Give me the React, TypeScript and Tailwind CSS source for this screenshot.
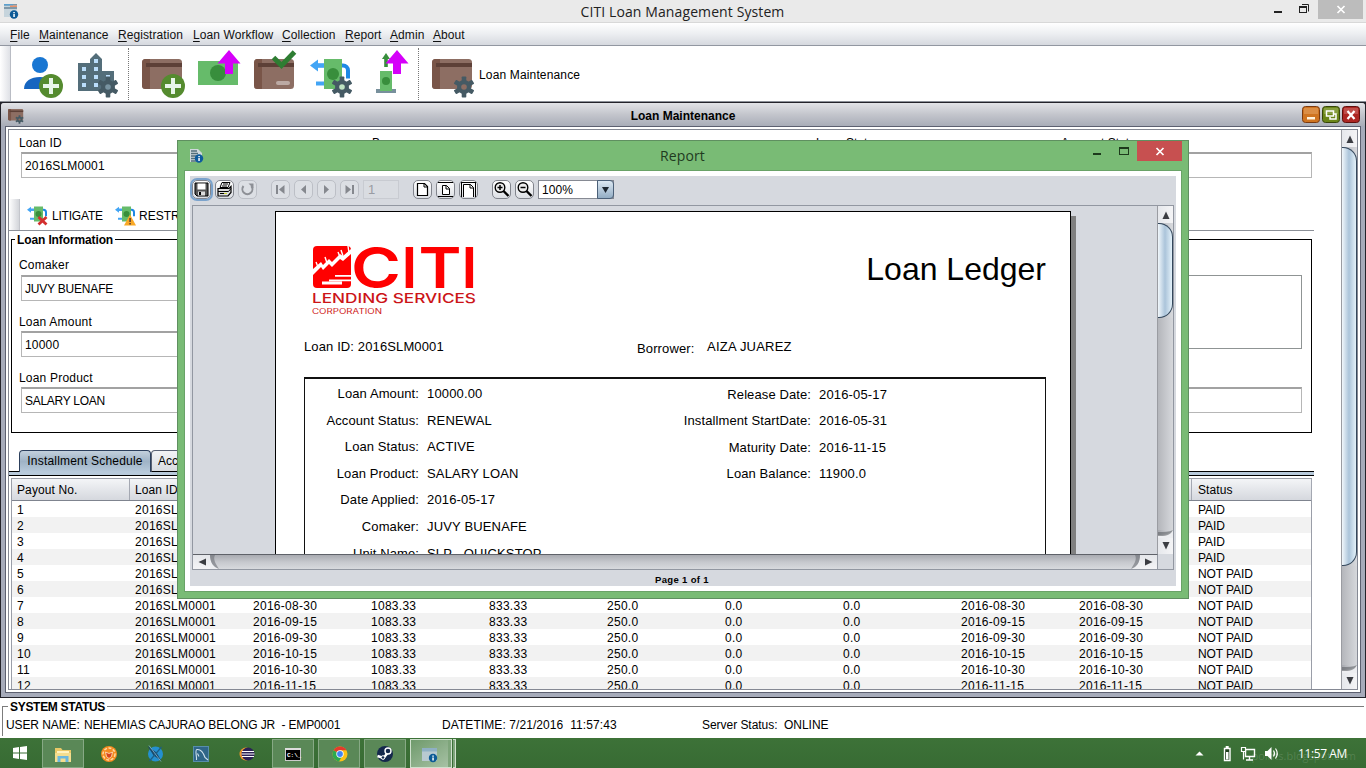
import React from "react";

const ARIAL = "font-['Liberation_Sans',Arial,sans-serif]";
const SEGOE = "font-['Open_Sans','Noto_Sans',sans-serif]";

function Gear({ cx, cy, s = 1, color = "#455a64", hole = "#8d6e63" }: { cx: number; cy: number; s?: number; color?: string; hole?: string }) {
  return (
    <g transform={`translate(${cx} ${cy}) scale(${s})`} fill={color}>
      {[0, 60, 120].map((a) => (
        <rect key={a} x="-2.3" y="-10.6" width="4.6" height="21.2" rx="0.8" transform={`rotate(${a})`} />
      ))}
      <circle r="7" />
      <circle r="2.8" fill={hole} />
    </g>
  );
}

function Plus({ cx, cy }: { cx: number; cy: number }) {
  return (
    <g>
      <circle cx={cx} cy={cy} r="12" fill="#558b2f" />
      <path d={`M${cx - 2} ${cy - 8}h4v6h6v4h-6v6h-4v-6h-6v-4h6z`} fill="#e8f5e9" />
    </g>
  );
}

function Case({ x, y }: { x: number; y: number }) {
  return (
    <g>
      <rect x={x} y={y} width="40" height="30" rx="3.5" fill="#8d6e63" />
      <path d={`M${x + 8} ${y}H${x + 3.5}a3.5 3.5 0 0 0-3.5 3.5v23a3.5 3.5 0 0 0 3.5 3.5H${x + 8}z`} fill="#795548" />
      <path d={`M${x + 4} ${y + 4}h36v4h-36z`} fill="#5d4037" />
    </g>
  );
}

function Refinance({ s = 1, x = 0, y = 0 }: { s?: number; x?: number; y?: number }) {
  return (
    <g transform={`translate(${x} ${y}) scale(${s})`}>
      <path d="M8 6.5h25a5 5 0 0 1 5 5v8" fill="none" stroke="#1e88e5" strokeWidth="4" />
      <path d="M0 6.500l8-6v4h8v4h-8v4z" fill="#42a5f5" />
      <path d="M6 22.500h12v4h-12z" fill="#42a5f5" />
      <rect x="14" y="0" width="18" height="30" fill="#66bb6a" />
      <circle cx="23" cy="15" r="6" fill="#388e3c" />
    </g>
  );
}

function Tool({ vb, w, children }: { vb: string; w: string; children: React.ReactNode }) {
  return (
    <svg viewBox={vb} className={`h-[55px] shrink-0 ${w}`}>
      {children}
    </svg>
  );
}

function Divider() {
  return <div className="h-[52px] w-px shrink-0 self-center border-l border-dotted border-[#777]" />;
}

function TopBar() {
  const menus: [string, string][] = [
    ["File", "w-[29px]"],
    ["Maintenance", "w-[79px]"],
    ["Registration", "w-[75px]"],
    ["Loan Workflow", "w-[89px]"],
    ["Collection", "w-[63px]"],
    ["Report", "w-[45px]"],
    ["Admin", "w-[43px]"],
    ["About", "w-[40px]"],
  ];
  return (
    <>
      <header className="flex h-[23px] shrink-0 items-start border-b border-[#d8d8d8] bg-[#eaeaea]">
        <svg viewBox="0 0 22 23" className="h-[23px] w-[22px]">
          <rect x="4" y="4" width="13" height="13" fill="#c6d4dc" />
          <path d="M4 4h13v1.500H4zM4 7h13v2H4z" fill="#7f98a8" />
          <path d="M4 4h9v1.500H4z" fill="#5ba0cf" />
          <path d="M10 5.500h7v1.500h-7z" fill="#e8916b" />
          <circle cx="14" cy="14.500" r="4.200" fill="#0d5a96" />
          <path d="M13.300 12h1.500v1.300h-1.500zM13.300 14h1.500v3h-1.500z" fill="#fff" />
        </svg>
        <div className={`ml-[83px] flex-1 text-center text-[14px] leading-[23px] tracking-[0.1px] text-[#222] ${SEGOE}`}>
          CITI Loan Management System
        </div>
        <svg viewBox="1260 0 106 23" className="h-[23px] w-[106px]">
          <path d="M1274 11h8v2h-8z" fill="#222" />
          <path d="M1302 4.500h6.500v7" fill="none" stroke="#222" />
          <rect x="1299.500" y="6.500" width="7" height="6" fill="none" stroke="#222" />
          <path d="M1299 6h8v2h-8z" fill="#222" />
          <rect x="1318" y="0" width="45" height="19" fill="#bcbcbc" />
          <path d="M1337.500 6l7 7M1344.500 6l-7 7" stroke="#fff" strokeWidth="1.700" />
        </svg>
      </header>
      <nav className="flex h-[23px] shrink-0 items-center border-b border-[#9297a1] bg-gradient-to-b from-white via-[#eceef1] to-[#d6d9df] pl-[10px] pt-[2px] text-[12px] tracking-[0.08px] text-[#111]">
        {menus.map(([m, w]) => (
          <span key={m} className={`shrink-0 whitespace-nowrap ${w}`}>
            <span className="underline underline-offset-2">{m[0]}</span>
            {m.slice(1)}
          </span>
        ))}
      </nav>
    </>
  );
}

function ToolBar() {
  return (
    <div className="flex h-[55px] shrink-0 bg-white">
      <div className="w-[11px] shrink-0 border-r border-[#b9bcc4] bg-gradient-to-r from-white to-[#dfe1e6]" />
      <Tool vb="11 46 56 55" w="w-[56px]">
        <circle cx="40" cy="65" r="8" fill="#1976d2" />
        <path d="M24 89c0-8 7-12 16-12s16 4 16 12z" fill="#1565c0" />
        <Plus cx={51} cy={86} />
      </Tool>
      <Tool vb="67 46 61 55" w="w-[61px]">
        <path d="M78 63h12v-4l6-6 6 6v12h12v20H78z" fill="#546e7a" />
        <path d="M82 67h4v4h-4zM82 75h4v4h-4zM82 83h4v4h-4zM94 59h4v4h-4zM94 67h4v4h-4zM94 75h4v4h-4zM94 83h4v4h-4zM106 75h4v4h-4z" fill="#bbdefb" />
        <Gear cx={108} cy={87} color="#455a64" hole="#7893a0" />
      </Tool>
      <Divider />
      <Tool vb="129 46 63 55" w="w-[63px]">
        <Case x={142} y={59} />
        <Plus cx={173} cy={86} />
      </Tool>
      <Tool vb="192 46 54 55" w="w-[54px]">
        <rect x="198" y="61" width="40" height="24" fill="#66bb6a" />
        <circle cx="218" cy="73" r="8" fill="#388e3c" />
        <path d="M229 50l11.500 13.500h-7.500v10.500h-8v-10.500h-7.500z" fill="#d500f9" />
      </Tool>
      <Tool vb="246 46 60 55" w="w-[60px]">
        <Case x={254} y={59} />
        <rect x="276" y="81" width="14" height="4" rx="2" fill="#bcaaa4" />
        <path d="M273.500 57.500l8 8 13-13.500" fill="none" stroke="#2e7d32" strokeWidth="5" />
      </Tool>
      <Tool vb="306 46 56 55" w="w-[56px]">
        <Refinance x={310} y={59} />
        <Gear cx={342} cy={87} hole="#bfe3c2" />
      </Tool>
      <Tool vb="362 46 56 55" w="w-[56px]">
        <path d="M386 53l4 6h-2.200v8h-3.600v-8h-2.200z" fill="#388e3c" />
        <rect x="376" y="89" width="20" height="4" fill="#78909c" />
        <rect x="380" y="71" width="12" height="20" fill="#66bb6a" />
        <circle cx="386" cy="81" r="4" fill="#388e3c" />
        <path d="M397 50l11.500 13.500h-7.500v10.500h-8v-10.500h-7.500z" fill="#d500f9" />
      </Tool>
      <Divider />
      <Tool vb="419 46 60 55" w="w-[60px]">
        <Case x={432} y={59} />
        <Gear cx={464} cy={87} />
      </Tool>
      <span className="self-center pt-[3px] text-[12px] tracking-[0.15px]">Loan Maintenance</span>
    </div>
  );
}

function Field({ value = "", className = "" }: { value?: string; className?: string }) {
  return (
    <div className={`flex h-[26px] shrink-0 items-center border border-t-2 border-[#b6b6b6] border-t-[#a2a2a2] bg-white pl-[3px] text-[12px] ${className}`}>{value}</div>
  );
}

function VScroll({ thumb }: { thumb: string }) {
  return (
    <div className="flex w-[16px] shrink-0 flex-col border-l border-[#9a9ca2] bg-gradient-to-r from-[#a5a7ad] via-[#c6c8cd] to-[#d8dade]">
      <div className="flex h-[17px] shrink-0 items-center justify-center bg-gradient-to-r from-[#e6e8ec] to-[#f4f4f6]">
        <svg viewBox="0 0 8 8" className="h-2 w-2">
          <path d="M4 0.500L7.500 8h-7z" fill="#3b3d42" />
        </svg>
      </div>
      <div className={`shrink-0 rounded-r-[14px] border border-l-0 border-[#33475c] bg-gradient-to-r from-[#f1f7fb] via-[#abc4da] to-[#e3f1f9] ${thumb}`} />
      <div className="flex-1 bg-gradient-to-r from-[#b4b6bb] to-[#d6d8dc]" />
      <svg viewBox="0 0 15 8" className="h-[8px] w-[15px] shrink-0">
        <path d="M0 5c7 0 12-1 15-5v8H0z" fill="#edeef1" />
        <path d="M0 2c6 0 11 0 15-2-3 6-8 6-15 6z" fill="#5f6268" opacity=".6" />
      </svg>
      <div className="flex h-[16px] shrink-0 items-center justify-center bg-gradient-to-r from-[#e6e8ec] to-[#f4f4f6]">
        <svg viewBox="0 0 8 8" className="h-2 w-2">
          <path d="M4 7.500L7.500 0h-7z" fill="#3b3d42" />
        </svg>
      </div>
    </div>
  );
}

const schedule: string[][] = [
  ["1", "2016-05-31", "2016-05-31", "PAID"],
  ["2", "2016-06-15", "2016-06-15", "PAID"],
  ["3", "2016-06-30", "2016-06-30", "PAID"],
  ["4", "2016-07-15", "2016-07-15", "PAID"],
  ["5", "2016-07-30", "2016-07-30", "NOT PAID"],
  ["6", "2016-08-15", "2016-08-15", "NOT PAID"],
  ["7", "2016-08-30", "2016-08-30", "NOT PAID"],
  ["8", "2016-09-15", "2016-09-15", "NOT PAID"],
  ["9", "2016-09-30", "2016-09-30", "NOT PAID"],
  ["10", "2016-10-15", "2016-10-15", "NOT PAID"],
  ["11", "2016-10-30", "2016-10-30", "NOT PAID"],
  ["12", "2016-11-15", "2016-11-15", "NOT PAID"],
];

function ScheduleTable() {
  const cols = "grid grid-cols-[118px_118px_118px_118px_118px_118px_118px_118px_118px_118px_120px]";
  return (
    <div className="ml-[2px] mt-[2px] w-[1301px] shrink-0 border border-b-0 border-[#9a9ea8]">
      <div className={`${cols} h-[22px] border-b border-[#7f848f] bg-gradient-to-b from-[#f4f5f7] to-[#d5d8de] text-[12px] leading-[22px]`}>
        {["Payout No.", "Loan ID", "", "", "", "", "", "", "", "", "Status"].map((h, i) => (
          <span key={i} className={`overflow-hidden whitespace-nowrap border-r border-[#a4a8b2] tracking-[0.1px] ${i === 10 ? "pl-[6px]" : "pl-[5px]"}`}>
            {h}
          </span>
        ))}
      </div>
      {schedule.map(([n, due, pen, status], i) => (
        <div key={n} className={`${cols} h-[16px] text-[12px] leading-[18px] tracking-[0.27px] ${i % 2 ? "bg-[#f2f2f2]" : "bg-white"}`}>
          {[n, "2016SLM0001", due, "1083.33", "833.33", "250.0", "0.0", "0.0", due, pen].map((c, j) => (
            <span key={j} className="pl-[5px]">
              {c}
            </span>
          ))}
          <span className="pl-[6px] tracking-[-0.1px]">{status}</span>
        </div>
      ))}
    </div>
  );
}

function FrameButtons() {
  return (
    <svg viewBox="1300 103 60 23" className="h-[23px] w-[60px]">
      <rect x="1302.500" y="106.500" width="17" height="16" rx="3" fill="#cf7420" stroke="#7a3a10" />
      <path d="M1304 108h14v6h-14z" fill="#e09a55" opacity=".7" />
      <path d="M1307 117h8v2.500h-8z" fill="#fff3dd" />
      <rect x="1322.500" y="106.500" width="17" height="16" rx="3" fill="#6b8518" stroke="#36450a" />
      <path d="M1324 108h14v6h-14z" fill="#93a850" opacity=".7" />
      <path d="M1326.500 111h7v5h-7zM1333 114h3v5h-6v-2" fill="none" stroke="#fff" strokeWidth="1.500" />
      <rect x="1342.500" y="106.500" width="17" height="16" rx="3" fill="#ad2622" stroke="#5e0f0d" />
      <path d="M1344 108h14v6h-14z" fill="#c8605b" opacity=".7" />
      <path d="M1347.500 111l7 8M1354.500 111l-7 8" stroke="#fff" strokeWidth="2.200" />
    </svg>
  );
}

function LoanFrame() {
  return (
    <section className="flex h-[597px] shrink-0 flex-col border-t border-[#8c9098] bg-[#23232a] px-px pb-px pt-px">
      <div className="flex min-h-0 flex-1 flex-col rounded-t-[3px] bg-[#a6abba] px-[4px] pb-[4px]">
        <div className="-mx-[4px] flex h-[23px] shrink-0 items-center rounded-t-[3px] bg-gradient-to-b from-[#e2e3e7] via-[#c3c5cc] to-[#a9adb8]">
          <svg viewBox="1 103 28 23" className="h-[23px] w-[28px]">
            <g transform="translate(8 109) scale(0.38)">
              <Case x={0} y={0} />
            </g>
            <Gear cx={19.500} cy={119.500} s={0.4} />
          </svg>
          <span className="flex-1 pl-[37px] pt-[2px] text-center text-[12px] font-bold">Loan Maintenance</span>
          <FrameButtons />
          <div className="w-[5px]" />
        </div>
        <div className="flex min-h-0 flex-1 border border-[#5c6070] bg-white p-[2px]">
          <div className="flex min-h-0 flex-1 border border-[#858994]">
            <div className="flex min-w-0 flex-1 flex-col overflow-hidden">
              <div className="ml-[10px] mt-[5px] flex h-[16px] shrink-0 items-center text-[12px]">
                <span className="w-[353px] tracking-[0.1px]">Loan ID</span>
                <span className="w-[444px]">Borrower</span>
                <span className="w-[245px]">Loan Status</span>
                <span>Account Status</span>
              </div>
              <div className="ml-[12px] mt-px flex w-[1291px] shrink-0 gap-2">
                <Field value="2016SLM0001" className="w-[344px] tracking-[0.15px]" />
                <Field className="w-[436px]" />
                <Field className="w-[236px]" />
                <Field className="flex-1" />
              </div>
              <div className="mt-[21px] flex h-[32px] w-[1305px] shrink-0 items-center border-b border-[#8c9098] text-[12px]">
                <div className="h-full w-[11px] border-r border-[#c4c6cc] bg-gradient-to-r from-white to-[#d3d5da]" />
                <svg viewBox="20 206 28 22" className="ml-0 mt-[3px] h-[22px] w-[28px]">
                  <Refinance x={27} y={207.500} s={0.5} />
                  <path d="M38.500 218l8 7.500M46.500 218l-8 7.500" stroke="#d32f2f" strokeWidth="2.800" />
                </svg>
                <span className="ml-[4px] w-[54px] pt-[3px] tracking-[-0.2px]">LITIGATE</span>
                <svg viewBox="106 206 30 22" className="ml-[1px] mt-[3px] h-[22px] w-[30px]">
                  <Refinance x={114} y={207.500} s={0.5} />
                  <path d="M129 215.500l6 11h-12z" fill="#f9a825" />
                  <path d="M128.300 219h1.600v4h-1.600zM128.300 224h1.600v1.500h-1.600z" fill="#5d4037" />
                </svg>
                <span className="ml-[2px] pt-[3px]">RESTRUCTURE</span>
              </div>
              <fieldset className="ml-[2px] h-[202px] w-[1301px] shrink-0 border border-black pb-0">
                <legend className="ml-[3px] px-[2px] pt-[2px] text-[12px] font-bold leading-[14px] tracking-[-0.12px]">Loan Information</legend>
                <div className="flex justify-between pl-[7px] pr-[9px]">
                  <div className="flex w-[400px] flex-col text-[12px] tracking-[0.2px]">
                    <span className="mt-[10px] leading-[16px]">Comaker</span>
                    <Field value="JUVY BUENAFE" className="ml-[2px] mt-[2px] tracking-[-0.2px]" />
                    <span className="mt-[13px] leading-[16px]">Loan Amount</span>
                    <Field value="10000" className="ml-[2px] mt-[1px]" />
                    <span className="mt-[13px] leading-[16px]">Loan Product</span>
                    <Field value="SALARY LOAN" className="ml-[2px] mt-[1px] tracking-[-0.28px]" />
                  </div>
                  <div className="flex w-[400px] flex-col pt-[28px]">
                    <div className="h-[74px] border border-[#8f9494]" />
                    <Field className="mt-[38px]" />
                  </div>
                </div>
              </fieldset>
              <div className="mt-[17px] flex h-[22px] w-[1305px] shrink-0 items-stretch text-[12px]">
                <div className="w-[10px] border-b border-black" />
                <div className="flex w-[132px] items-center justify-center rounded-t-[4px] border border-b-0 border-[#2c3f5c] bg-gradient-to-b from-[#c3d0dc] via-[#9fb3c6] to-[#b8cadb] pb-[2px] tracking-[0.2px]">Installment Schedule</div>
                <div className="flex w-[110px] items-center rounded-t-[4px] border border-b-black border-[#5a6274] bg-gradient-to-b from-[#f2f3f5] to-[#d9dce1] pl-[6px]">Account Ledger</div>
                <div className="flex-1 border-b border-black" />
              </div>
              <div className="h-[4px] w-[1305px] shrink-0 border-b border-black bg-[#b8cadb]" />
              <ScheduleTable />
            </div>
            <VScroll thumb="h-[419px]" />
          </div>
        </div>
      </div>
    </section>
  );
}

function ToolButton({ children, off = false, className = "" }: { children: React.ReactNode; off?: boolean; className?: string }) {
  return (
    <div className={`flex h-[19px] w-[19px] shrink-0 items-center justify-center rounded-[5px] border ${off ? "border-[#bcbfc6] bg-[#dcdfe4]" : "border-[#81848c] bg-gradient-to-b from-white to-[#dcdfe4]"} ${className}`}>
      <svg viewBox="0 0 17 17" className="h-[17px] w-[17px] shrink-0">
        {children}
      </svg>
    </div>
  );
}

function ReportToolbar() {
  return (
    <div className="flex h-[29px] shrink-0 items-center gap-[4px] pb-[2px] pl-[2px]">
      <ToolButton className="outline outline-2 outline-[#7ba3cc]">
        <path d="M2 2h13v13H4l-2-2z" fill="#555" stroke="#000" />
        <path d="M4.500 2.500h8v6h-8z" fill="#fff" />
        <path d="M5 10.500h7v4H5z" fill="#ddd" />
        <path d="M6 11h2v3H6z" fill="#000" />
      </ToolButton>
      <ToolButton>
        <path d="M6 1.500h8l-2 5H4z" fill="#fff" stroke="#000" />
        <path d="M7 3h5M6 5h5" stroke="#000" />
        <path d="M2 7.500h11l2-2v6l-3 3.500H2z" fill="#ddd" stroke="#000" strokeWidth="1.200" />
        <path d="M2 10.500h10.500l2.500-3M4 12.500h6" stroke="#000" fill="none" />
        <path d="M8 12h3v1H8z" fill="#c9d437" />
      </ToolButton>
      <ToolButton off>
        <path d="M4.500 5a5 5 0 1 0 7.800 0" fill="none" stroke="#8d9096" strokeWidth="2" />
        <path d="M9.500 2.500h5v5z" fill="#8d9096" />
      </ToolButton>
      <ToolButton off className="ml-[10px]">
        <path d="M4 4h2v9H4zM12.500 4v9L7 8.500z" fill="#85888e" />
      </ToolButton>
      <ToolButton off>
        <path d="M11 4v9L6 8.500z" fill="#85888e" />
      </ToolButton>
      <ToolButton off>
        <path d="M6 4v9l5-4.500z" fill="#85888e" />
      </ToolButton>
      <ToolButton off>
        <path d="M4.500 4v9L10 8.500zM11 4h2v9h-2z" fill="#85888e" />
      </ToolButton>
      <div className="h-[19px] w-[36px] border border-[#c8cbd1] bg-[#d9dce1] pl-[4px] text-[13px] leading-[18px] text-[#999ca3]">1</div>
      <ToolButton className="ml-[10px]">
        <path d="M3.500 2.500h7l3 3v9h-10z" fill="#fff" stroke="#000" strokeWidth="1.200" />
        <path d="M10 2.500v3.500h3.500" fill="none" stroke="#000" />
      </ToolButton>
      <ToolButton>
        <path d="M1 1.500h15M1 15.500h15" stroke="#000" />
        <path d="M5.500 4.500h4l3 3v6h-7z" fill="#fff" stroke="#000" />
        <path d="M9 4.500v3.500h3.500" fill="none" stroke="#000" />
      </ToolButton>
      <ToolButton>
        <path d="M1.500 1v15M15.500 1v15M1 1.500h15" stroke="#000" />
        <path d="M3.500 16V3.500h7l3 3V16" fill="#fff" stroke="#000" />
        <path d="M10 3.500v3.500h3.500" fill="none" stroke="#000" />
      </ToolButton>
      <ToolButton className="ml-[10px]">
        <circle cx="7" cy="6.500" r="4.800" fill="#eee" stroke="#000" strokeWidth="1.400" />
        <path d="M4.500 6.500h5M7 4v5" stroke="#000" strokeWidth="1.500" />
        <path d="M10.500 10l5 5" stroke="#000" strokeWidth="2.400" />
      </ToolButton>
      <ToolButton>
        <circle cx="7" cy="6.500" r="4.800" fill="#eee" stroke="#000" strokeWidth="1.400" />
        <path d="M4.500 6.500h5" stroke="#000" strokeWidth="1.500" />
        <path d="M10.500 10l5 5" stroke="#000" strokeWidth="2.400" />
      </ToolButton>
      <div className="flex h-[19px] w-[76px] border border-[#868a93] bg-white text-[12px] leading-[18px]">
        <span className="flex-1 pl-[3px] tracking-[0.1px]">100%</span>
        <span className="-m-px flex w-[17px] items-center justify-center rounded-r-[4px] border border-[#4b6078] bg-gradient-to-b from-[#dce8f2] to-[#93adc4]">
          <svg viewBox="0 0 8 8" className="h-[7px] w-[7px]">
            <path d="M0 1h8L4 8z" fill="#1d2630" />
          </svg>
        </span>
      </div>
    </div>
  );
}

function Logo() {
  return (
    <svg viewBox="304 240 180 80" className="h-[80px] w-[180px]">
      <rect x="313" y="246" width="38" height="42" rx="4" fill="#f00" />
      <path d="M313 269l8-7 2 3 6-6 3 3 8-8 3 2 8-7v5l-8 7-3-2-8 8-3-3-6 6-2-3-8 8z" fill="#fff" />
      <path d="M316 262l2 5M325 257l2 6M338 252l2 5M341 250l2 6M348 246l1 7" stroke="#fff" strokeWidth="1.400" />
      <path d="M335 275h16v1.800h-16zM329 279.500h22v1.800h-22zM322 281.500h20v3h-20z" fill="#fff" />
      <g fill="#f00" className="font-['Inter',sans-serif] text-[57px] font-semibold">
        <text x="351" y="287.500" textLength="50" lengthAdjust="spacingAndGlyphs">C</text>
        <text x="401.500" y="287.500">I</text>
        <text x="418.500" y="287.500" textLength="43" lengthAdjust="spacingAndGlyphs">T</text>
        <text x="461.500" y="287.500">I</text>
      </g>
      <text x="312" y="303" textLength="164" lengthAdjust="spacingAndGlyphs" fill="#cc1418" className="font-['Inter',sans-serif] text-[13.500px] font-medium">LENDING SERVICES</text>
      <text x="312" y="313.500" textLength="70" lengthAdjust="spacingAndGlyphs" fill="#d01c1c" className="font-['Inter',sans-serif] text-[7px]">CORPORATION</text>
    </svg>
  );
}

function Pair({ l, v }: { l: string; v: string }) {
  return (
    <div className="flex h-[26.600px] items-center gap-[8px] text-[13px]">
      <span className="w-[140px] shrink-0 whitespace-nowrap text-right tracking-[0.1px]">{l}</span>
      <span className="whitespace-pre tracking-[0.16px]">{v}</span>
    </div>
  );
}

function ReportPage() {
  return (
    <div className="ml-[82px] mt-[5px] flex w-[801px] shrink-0">
      <div className="h-[343px] w-[796px] shrink-0 overflow-hidden border border-b-0 border-black bg-white">
        <div className="flex h-[108px] justify-between pl-[28px] pr-[24px] pt-[28px]">
          <Logo />
          <span className="pt-[9px] text-[32px] leading-[40px]">Loan Ledger</span>
        </div>
        <div className="flex h-[57px] pl-[28px] pt-[18px] text-[13px] leading-[18px] tracking-[0.12px]">
          <span className="w-[333px]">Loan ID: 2016SLM0001</span>
          <span className="w-[70px] pt-[2px]">Borrower:</span>
          <span className="tracking-[0.22px]">AIZA JUAREZ</span>
        </div>
        <div className="ml-[28px] flex h-[300px] w-[742px] border-2 border-[#111] border-l-[1.500px] border-r-[1.500px]">
          <div className="-ml-[26px] w-[367px] pt-[1.400px]">
            <Pair l="Loan Amount:" v="10000.00" />
            <Pair l="Account Status:" v="RENEWAL" />
            <Pair l="Loan Status:" v="ACTIVE" />
            <Pair l="Loan Product:" v="SALARY LOAN" />
            <Pair l="Date Applied:" v="2016-05-17" />
            <Pair l="Comaker:" v="JUVY BUENAFE" />
            <Pair l="Unit Name:" v="SLP - QUICKSTOP" />
          </div>
          <div className="ml-[25px] pt-[2px]">
            <Pair l="Release Date:" v="2016-05-17" />
            <Pair l="Installment StartDate:" v="2016-05-31" />
            <Pair l="Maturity Date:" v="2016-11-15" />
            <Pair l="Loan Balance:" v="11900.0" />
          </div>
        </div>
      </div>
      <div className="mt-[5px] h-[338px] w-[5px] bg-[#808080]" />
    </div>
  );
}

function ReportDialog() {
  return (
    <section className="absolute left-[177px] top-[140px] flex h-[459px] w-[1012px] flex-col border border-[#5f8f60] bg-[#79bb75] px-[6px] pb-[6px]">
      <header className="flex h-[29px] shrink-0 items-start">
        <svg viewBox="184 141 26 29" className="h-[29px] w-[26px]">
          <path d="M190 149h8l4 4v9h-12z" fill="#cfd8dc" />
          <path d="M191 151h6M191 153.500h7M191 156h8M191 158.500h7M191 161h5" stroke="#546e7a" strokeWidth="1.300" />
          <circle cx="199" cy="158.500" r="4.200" fill="#0d5a9c" />
          <path d="M198.300 156h1.500v1.300h-1.500zM198.300 158h1.500v3h-1.500z" fill="#fff" />
        </svg>
        <span className={`flex-1 pl-[65px] text-center text-[14px] leading-[29px] tracking-[0.1px] text-[#1f3a1f] ${SEGOE}`}>Report</span>
        <svg viewBox="1090 141 92 29" className="h-[29px] w-[92px]">
          <path d="M1093 153h8v2h-8z" fill="#1d3a1c" />
          <rect x="1119.500" y="148.500" width="9" height="6" fill="none" stroke="#1d3a1c" />
          <path d="M1119 147h10v2h-10z" fill="#1d3a1c" />
          <rect x="1137" y="141" width="45" height="20" fill="#c75050" />
          <path d="M1156.500 148l7 7M1163.500 148l-7 7" stroke="#fff" strokeWidth="1.700" />
        </svg>
      </header>
      <div className="flex min-h-0 flex-1 border border-[#69a267] bg-white p-[5px]">
        <div className="flex min-w-0 flex-1 flex-col bg-[#d6d9df]">
          <ReportToolbar />
          <div className="ml-[2px] mr-[1px] flex h-[349px] w-[982px] shrink-0 overflow-hidden border border-b-0 border-[#9297a1]">
            <div className="min-w-0 flex-1 overflow-hidden">
              <ReportPage />
            </div>
            <VScroll thumb="h-[95px]" />
          </div>
          <div className="ml-[2px] flex h-[16px] w-[982px] shrink-0 border border-t-0 border-[#9297a1]">
            <div className="flex w-[965px] border-r border-t border-r-[#9297a1] border-t-[#5f6269] bg-gradient-to-b from-[#a9abb1] via-[#c6c8cd] to-[#d8dade]">
              <div className="flex w-[17px] items-center justify-center bg-gradient-to-b from-[#e4e6ea] to-[#f4f4f6]">
                <svg viewBox="0 0 8 8" className="h-2 w-2">
                  <path d="M0.500 4L8 0.500v7z" fill="#3b3d42" />
                </svg>
              </div>
              <svg viewBox="0 0 10 14" className="h-[14px] w-[10px]">
                <path d="M0 0c0 7 3 12 9 14H0z" fill="#eeeff2" />
                <path d="M0 0h5c-2 4 0 8 4 14C3 12 0 7 0 0z" fill="#6d7076" opacity=".6" />
              </svg>
              <div className="flex-1" />
              <svg viewBox="0 0 10 14" className="h-[14px] w-[10px]">
                <path d="M10 0c0 7-3 12-9 14h9z" fill="#eeeff2" />
                <path d="M10 0H5c2 4 0 8-4 14 6-2 9-7 9-14z" fill="#6d7076" opacity=".6" />
              </svg>
              <div className="flex w-[17px] items-center justify-center bg-gradient-to-b from-[#e4e6ea] to-[#f4f4f6]">
                <svg viewBox="0 0 8 8" className="h-2 w-2">
                  <path d="M7.500 4L0 0.500v7z" fill="#3b3d42" />
                </svg>
              </div>
            </div>
          </div>
          <div className="flex-1 pr-[2px] pt-[3px] text-center text-[9.500px] font-bold leading-[13px] tracking-[0.35px]">Page 1 of 1</div>
        </div>
      </div>
    </section>
  );
}

function TaskItem({ x, open = false, active = false, children }: { x: number; open?: boolean; active?: boolean; children: React.ReactNode }) {
  return (
    <div className={`flex h-[29px] w-[42px] shrink-0 items-center justify-center border ${active ? "border-[#cfe0cd] bg-gradient-to-br from-[#6f9a6c] to-[#a9c3a7]" : open ? "mr-[4px] border-[#87a985] bg-[#5a8857]" : "mr-[4px] border-transparent"}`}>
      <svg viewBox={`${x - 10} 743 20 20`} className="h-[20px] w-[20px]">
        {children}
      </svg>
    </div>
  );
}

function Taskbar() {
  return (
    <footer className="flex h-[30px] shrink-0 items-start bg-gradient-to-b from-[#3d7238] to-[#376b33] pt-px">
      <div className="flex w-[42px] items-center justify-center self-stretch pb-[2px] pr-[3px]">
        <svg viewBox="0 0 14 14" className="h-[14px] w-[14px]">
          <path d="M0 2l6-.9V6.500H0zM7 1l7-1v6.500H7zM0 7.500h6v5.400L0 12zM7 7.500h7V14l-7-1z" fill="#fff" />
        </svg>
      </div>
      <TaskItem x={63} open>
        <path d="M55 747h6l1.500 2H71v12H55z" fill="#e9c867" />
        <path d="M57 750h12v8H57z" fill="#fff3c0" />
        <path d="M55 752h16v9H55z" fill="#f4dd8e" />
        <path d="M57.500 761v-6h11v6h-3v-3.500h-5v3.500z" fill="#6bb7dd" />
      </TaskItem>
      <TaskItem x={109}>
        <circle cx="109" cy="753" r="8" fill="#f58a1f" />
        <circle cx="109" cy="753" r="6" fill="none" stroke="#ffd9a0" strokeWidth="1.500" strokeDasharray="3 1.500" />
        <path d="M105.500 751l3.500 1.500 3.500-1.500-1 4.500-2.500 2-2.500-2z" fill="#d8431c" stroke="#ffe7c7" strokeWidth=".8" />
      </TaskItem>
      <TaskItem x={155}>
        <circle cx="155.500" cy="753" r="7.500" fill="#2490d0" />
        <path d="M147.500 745l9 6.500 5 8.500-8-5.500z" fill="#1c4a6b" />
        <path d="M161.500 746l-12 14" stroke="#1c5f86" strokeWidth="1.200" />
        <path d="M149 744.500l12 16" stroke="#8fc4e0" strokeWidth=".7" />
      </TaskItem>
      <TaskItem x={201}>
        <rect x="193.500" y="745.500" width="15" height="15" fill="#2f6688" stroke="#568dab" />
        <path d="M196.500 759c.5-4-2-10 .5-10.500 5-.5 7 5 8 8l3 2.500M197.500 752.500l1.500 3" fill="none" stroke="#cfe2ec" strokeWidth="1.100" />
      </TaskItem>
      <TaskItem x={247}>
        <circle cx="246" cy="753" r="6.500" fill="#f0962c" />
        <circle cx="248" cy="753" r="6.500" fill="#2c2255" />
        <path d="M242 750.500h12M241.500 753h13M242 755.500h12" stroke="#fff" strokeWidth="1.200" />
      </TaskItem>
      <TaskItem x={293} open>
        <rect x="285.500" y="747.500" width="15" height="12" fill="#000" stroke="#ccc" />
        <path d="M285 747h16v2h-16z" fill="#ddd" />
        <text x="287" y="756" fill="#fff" className="font-['Liberation_Mono',monospace] text-[6px] font-bold">C:\_</text>
      </TaskItem>
      <TaskItem x={339} open>
        <circle cx="340" cy="753" r="7.500" fill="#fbc116" />
        <path d="M340 753l-6.500-3.750A7.500 7.500 0 0 1 346.500 749.200H340z" fill="#e33b2e" />
        <path d="M333.500 749.200A7.500 7.500 0 0 0 339 760.400l3.500-6z" fill="#2da94f" />
        <circle cx="340" cy="753" r="3.700" fill="#fff" />
        <circle cx="340" cy="753" r="2.900" fill="#4285f4" />
      </TaskItem>
      <TaskItem x={385} open>
        <circle cx="385" cy="753" r="8" fill="#14284c" />
        <path d="M377.500 755l6 2 4-5" stroke="#fff" strokeWidth="2.400" fill="none" />
        <circle cx="388" cy="750" r="3" fill="#14284c" stroke="#fff" strokeWidth="1.400" />
        <circle cx="383" cy="756.500" r="1.800" fill="#14284c" stroke="#fff" />
      </TaskItem>
      <div className="flex w-[42px] shrink-0">
        <div className="-mr-[4px] shrink-0">
          <TaskItem x={432} active>
            <path d="M423 747h15v13h-15z" fill="#b8c9d0" />
            <path d="M423 747h15v3.500h-15z" fill="#8fb0c4" />
            <circle cx="434" cy="757" r="4.200" fill="#0d5a96" />
            <path d="M433.300 754.500h1.500v1.300h-1.500zM433.300 756.500h1.500v3h-1.500z" fill="#fff" />
          </TaskItem>
        </div>
        <div className="ml-[0px] h-[29px] w-[4px] shrink-0 border-y border-r border-[#cfe0cd] bg-[#7ea57b]" />
      </div>
      <div className="-ml-px h-[29px] w-[2px] shrink-0" />
      <div className="h-[29px] w-[3px] shrink-0 border-y border-r border-[#cfe0cd] bg-[#7ea57b]" />
      <div className="flex-1" />
      <svg viewBox="1190 739 90 29" className="h-[29px] w-[90px]">
        <path d="M1199.500 751.500l4 4h-8z" fill="#fff" />
        <path d="M1224.500 748.500h5.500v12h-5.500z" fill="#20401e" stroke="#fff" strokeWidth="1.400" />
        <path d="M1225.700 746h3v2h-3zM1226 752h2.500v7.500h-2.500z" fill="#fff" />
        <path d="M1245.500 749.500h9v7h-9zM1249.500 757v3M1246 760h7" fill="none" stroke="#fff" strokeWidth="1.400" />
        <path d="M1241.500 747.500h4v4h-4zM1243.500 751.500v8" fill="#376b33" stroke="#fff" strokeWidth="1.200" />
        <path d="M1265 751h2.500l4-4v13l-4-4h-2.500z" fill="#fff" />
        <path d="M1273.500 750.500q2 3 0 6M1275.500 748.500q3.500 5 0 10" fill="none" stroke="#fff" strokeWidth="1.200" />
      </svg>
      <div className={`relative w-[86px] self-stretch pl-[18px] text-[12px] leading-[29px] tracking-[-0.4px] text-white ${SEGOE}`}>
        <span className="absolute right-[10px] top-[2px] text-[11px] tracking-normal text-white/15">points.blogspot.com</span>
        <span className="relative whitespace-nowrap">11:57 AM</span>
      </div>
    </footer>
  );
}

export default function App() {
  return (
    <main className={`relative flex h-[768px] w-[1366px] flex-col overflow-hidden bg-white text-black ${ARIAL}`}>
      <TopBar />
      <ToolBar />
      <LoanFrame />
      <div className="flex h-[40px] shrink-0 flex-col pl-[2px] pr-[2px] text-[12px]">
        <fieldset className="h-[38px] border-l border-t border-[#7c7c7c]">
          <legend className="ml-[5px] px-[2px] pt-px text-[12px] font-bold leading-[16px] tracking-[-0.3px]">SYSTEM STATUS</legend>
          <div className="flex whitespace-nowrap pl-[3px] pt-[2px] leading-[16px]">
            <span className="w-[78px] tracking-[-0.1px]">USER NAME:</span>
            <span className="w-[358px] tracking-[-0.14px]">NEHEMIAS CAJURAO BELONG JR&nbsp; - EMP0001</span>
            <span className="w-[260px] tracking-[0.08px]">DATETIME: 7/21/2016&nbsp; 11:57:43</span>
            <span className="tracking-[-0.04px]">Server Status:&nbsp; ONLINE</span>
          </div>
        </fieldset>
      </div>
      <Taskbar />
      <ReportDialog />
    </main>
  );
}
